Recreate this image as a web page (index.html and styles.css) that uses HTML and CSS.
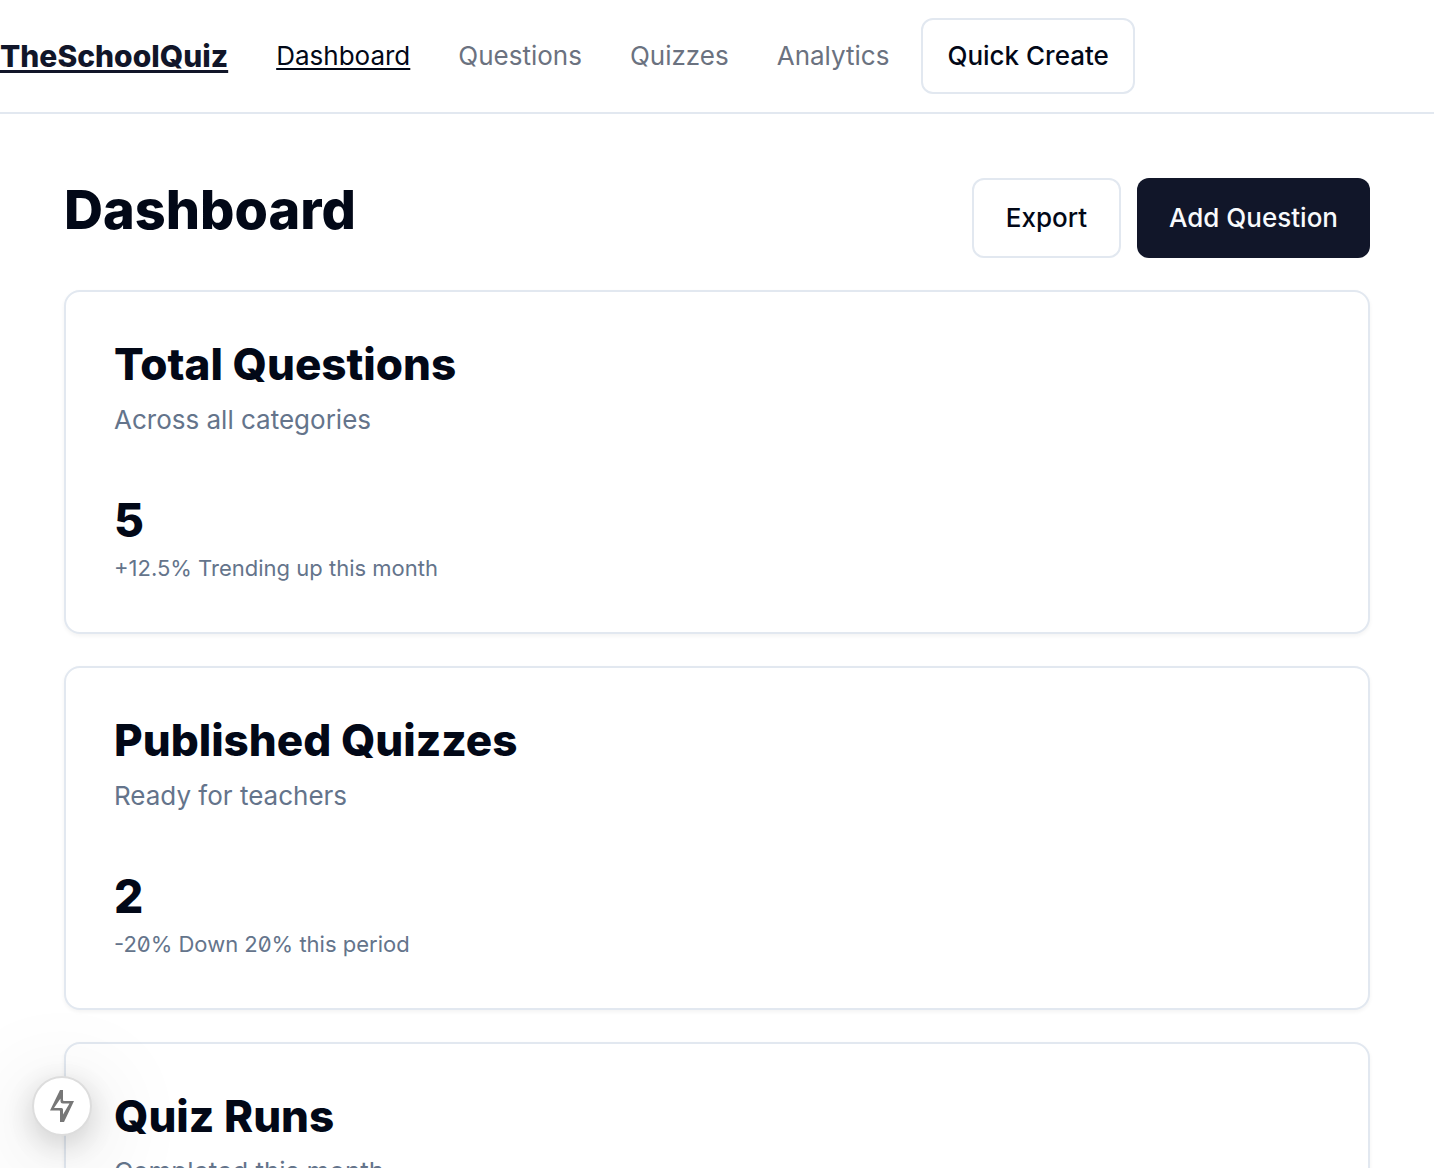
FILE: index.html
```html
<!DOCTYPE html>
<html lang="en">
<head>
<meta charset="utf-8">
<meta name="viewport" content="width=device-width, initial-scale=1">
<title>Dashboard - TheSchoolQuiz</title>
<link rel="stylesheet" href="styles.css">
</head>
<body>
<header class="site-header">
  <a class="brand" href="#">TheSchoolQuiz</a>
  <nav class="nav" aria-label="Main">
    <a class="nav-link active" href="#" aria-current="page">Dashboard</a>
    <a class="nav-link" href="#">Questions</a>
    <a class="nav-link" href="#">Quizzes</a>
    <a class="nav-link" href="#">Analytics</a>
  </nav>
  <button class="button quick" type="button">Quick Create</button>
</header>
<main class="page">
  <div class="page-head">
    <h1 class="page-title">Dashboard</h1>
    <div class="actions">
      <button class="button" type="button">Export</button>
      <button class="button primary" type="button">Add Question</button>
    </div>
  </div>
  <section class="card">
    <h2 class="card-title">Total Questions</h2>
    <p class="card-desc">Across all categories</p>
    <p class="card-value">5</p>
    <p class="card-note">+12.5% Trending up this month</p>
  </section>
  <section class="card">
    <h2 class="card-title">Published Quizzes</h2>
    <p class="card-desc">Ready for teachers</p>
    <p class="card-value">2</p>
    <p class="card-note">-20% Down 20% this period</p>
  </section>
  <section class="card">
    <h2 class="card-title">Quiz Runs</h2>
    <p class="card-desc">Completed this month</p>
  </section>
</main>
<button class="dev-badge" type="button" aria-label="Developer tools">
  <svg width="26" height="34" viewBox="0 0 26 34" aria-hidden="true"><path d="M11 1H14V11Q14 12 15 12H25L15 33H11V22Q11 21.500 10.500 21.500H1Z M11.500 9.500L5 19H12.500Q14 19 14 20.500V25.500L20.500 14.500H14Q11.500 14.500 11.500 12Z" fill="#777" fill-rule="evenodd"/></svg>
</button>
</body>
</html>
```
FILE: styles.css
```css
* {
  box-sizing: border-box;
}

body {
  margin: 0;
  background: #fff;
  color: #020817;
  font-family: Inter, "Liberation Sans", sans-serif;
  font-size: 26px;
  line-height: 40px;
  font-feature-settings: "zero" 1;
}

h1, h2, p {
  margin: 0;
}

.site-header {
  display: flex;
  align-items: center;
  padding: 18px 0;
  border-bottom: 2px solid #e2e8f0;
}

.brand {
  margin-right: 48px;
  color: #111629;
  font-size: 30px;
  font-weight: 800;
  text-decoration-thickness: 3px;
  text-underline-offset: 3px;
}

.nav {
  display: flex;
  gap: 48px;
  margin-right: 32px;
}

.nav-link {
  color: #6b7280;
  text-decoration: none;
}

.nav-link.active {
  color: #020817;
  text-decoration: underline;
  text-decoration-thickness: 2px;
  text-underline-offset: 3px;
}

.button {
  height: 80px;
  padding: 0 32px;
  border: 2px solid #e2e8f0;
  border-radius: 12px;
  background: #fff;
  color: #020817;
  font: inherit;
  font-weight: 500;
  white-space: nowrap;
}

.button.quick {
  height: 76px;
  padding: 0 24px;
}

.button.primary {
  border: 0;
  background: #111629;
  color: #f8fafc;
}

.page {
  display: flex;
  flex-direction: column;
  gap: 32px;
  padding: 64px;
}

.page-head {
  display: flex;
  justify-content: space-between;
  align-items: flex-start;
}

.page-title {
  font-size: 54px;
  line-height: 64px;
  font-weight: 800;
}

.actions {
  display: flex;
  gap: 16px;
}

.card {
  padding: 48px;
  border: 2px solid #e2e8f0;
  border-radius: 16px;
  background: #fff;
  box-shadow: 0 2px 4px rgba(0, 0, 0, 0.05);
}

.card-title {
  font-size: 44px;
  line-height: 48px;
  font-weight: 800;
}

.card-desc {
  margin-top: 12px;
  color: #64748b;
}

.card-value {
  margin-top: 48px;
  font-size: 46px;
  line-height: 64px;
  font-weight: 800;
}

.card-note {
  color: #64748b;
  font-size: 22px;
  line-height: 32px;
}

.dev-badge {
  position: fixed;
  left: 32px;
  bottom: 32px;
  display: grid;
  place-items: center;
  width: 60px;
  height: 60px;
  padding: 0;
  border: 2px solid #ddd;
  border-radius: 50%;
  background: #fff;
  box-shadow: 0 8px 32px rgba(0, 0, 0, 0.18), 0 16px 96px 8px rgba(0, 0, 0, 0.13);
}
```
